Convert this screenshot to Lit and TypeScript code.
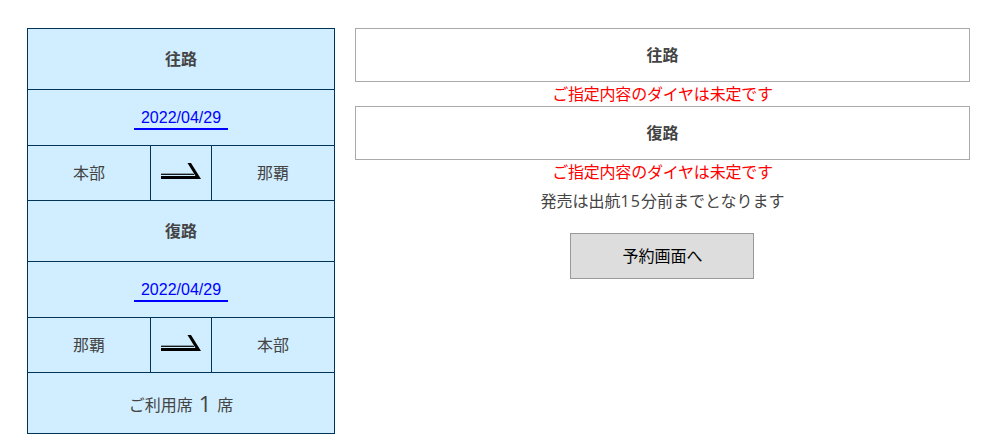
import { LitElement, html, css } from "lit";
import { customElement } from "lit/decorators.js";

interface Leg {
  title: string;
  date: string;
  from: string;
  to: string;
}

const legs: Leg[] = [
  { title: "往路", date: "2022/04/29", from: "本部", to: "那覇" },
  { title: "復路", date: "2022/04/29", from: "那覇", to: "本部" },
];

@customElement("app-root")
export class AppRoot extends LitElement {
  static styles = css`
    :host {
      display: flex;
      align-items: flex-start;
      gap: 20px;
      box-sizing: border-box;
      width: 999px;
      height: 445px;
      padding: 28px 29px 0 27px;
      overflow: hidden;
      background: #fff;
      color: #444;
      font: 16px/24px "Noto Sans CJK JP", sans-serif;
    }
    .trip {
      display: grid;
      grid-template-columns: 122px 60px 122px;
      grid-template-rows: 60px 55px 54px 60px 55px 54px 60px;
      gap: 1px;
      padding: 1px;
      background: #003358;
      flex: none;
    }
    .cell {
      display: flex;
      align-items: center;
      justify-content: center;
      box-sizing: border-box;
      padding-bottom: 2px;
      background: #d0eeff;
    }
    .wide {
      grid-column: 1 / -1;
    }
    .title {
      font-weight: 700;
    }
    .day {
      padding-bottom: 0;
    }
    .date {
      box-sizing: border-box;
      width: 94px;
      height: 24px;
      border-bottom: 2px solid #00f;
      color: #00f;
      font: 16px/24px "Liberation Sans", Arial, sans-serif;
      text-align: center;
      text-decoration: none;
    }
    .arrow {
      display: block;
      width: 40px;
      height: 18px;
      margin-bottom: 2px;
    }
    .seats {
      padding: 1px 0 0;
    }
    .count {
      margin: 0 6px 1px;
      font-family: "Open Sans", sans-serif;
      font-size: 22px;
    }
    .result {
      flex: 1;
      display: flex;
      flex-direction: column;
      text-align: center;
    }
    .heading {
      box-sizing: border-box;
      height: 54px;
      border: 1px solid #aaa;
      line-height: 50px;
      font-weight: 700;
    }
    .error {
      height: 24px;
      line-height: 22px;
      letter-spacing: -0.2px;
      color: #f00;
    }
    .note {
      height: 24px;
      margin-top: 5px;
      line-height: 22px;
    }
    .digits {
      font-family: "Open Sans", sans-serif;
      letter-spacing: 1px;
    }
    .button {
      align-self: center;
      box-sizing: border-box;
      width: 184px;
      height: 46px;
      margin: 20px 1px 0 0;
      padding: 0 0 2px 1px;
      border: 1px solid #999;
      border-radius: 0;
      background: #ddd;
      color: #000;
      font: inherit;
    }
  `;

  private renderLeg(leg: Leg) {
    return html`
      <div class="cell wide title">${leg.title}</div>
      <div class="cell wide day"><a class="date">${leg.date}</a></div>
      <div class="cell">${leg.from}</div>
      <div class="cell">
        <svg class="arrow" viewBox="0 0 40 18">
          <path d="M0 11.5H32.5" stroke="#8b9ea8" stroke-width="1" />
          <path d="M0 12.5H33" stroke="#10181c" stroke-width="1" />
          <path d="M26.5 1H30L40 17H0V14H34.5Z" fill="#000" />
        </svg>
      </div>
      <div class="cell">${leg.to}</div>
    `;
  }

  render() {
    return html`
      <div class="trip">
        ${legs.map((leg) => this.renderLeg(leg))}
        <div class="cell wide seats">ご利用席<span class="count">1</span>席</div>
      </div>
      <div class="result">
        ${legs.map(
          (leg) => html`
            <div class="heading">${leg.title}</div>
            <div class="error">ご指定内容のダイヤは未定です</div>
          `
        )}
        <div class="note">発売は出航<span class="digits">15</span>分前までとなります</div>
        <button class="button">予約画面へ</button>
      </div>
    `;
  }
}
